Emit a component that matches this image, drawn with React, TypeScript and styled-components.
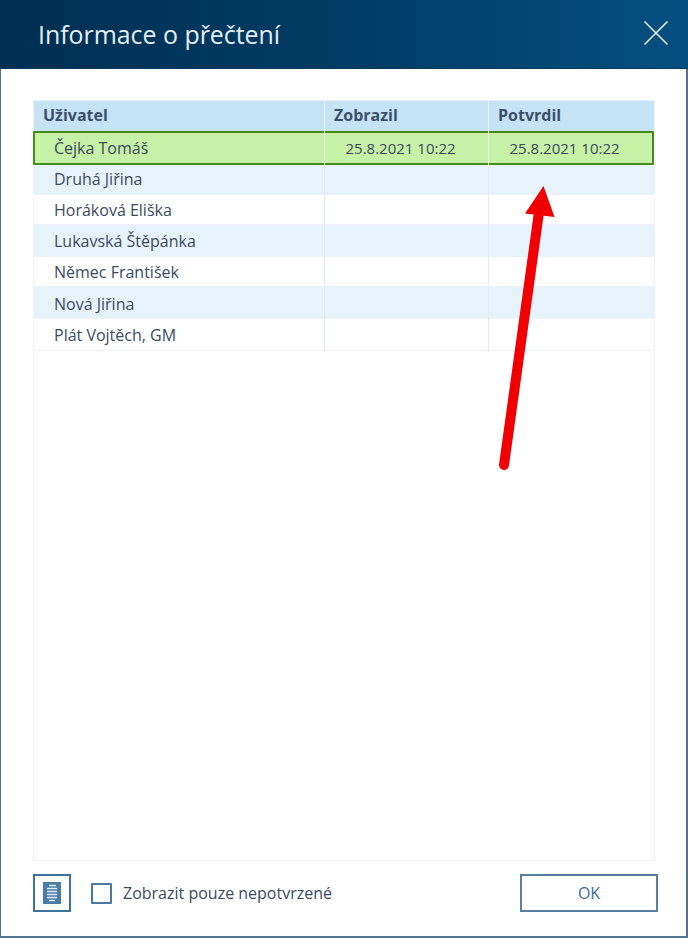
import React from "react";
import styled, { createGlobalStyle } from "styled-components";

const Global = createGlobalStyle`
  html, body { margin: 0; padding: 0; background: #ffffff; }
  body { font-family: "Open Sans", "Liberation Sans", sans-serif; }
`;

const Dialog = styled.div`
  position: relative;
  box-sizing: border-box;
  width: 688px;
  height: 938px;
  display: flex;
  flex-direction: column;
  background: #ffffff;
  border-style: solid;
  border-color: #4f7391;
  border-width: 0 2px 2px 1px;
`;

const Header = styled.header`
  height: 69px;
  flex: none;
  margin: 0 -2px 0 -1px;
  padding: 0 19px 0 38px;
  display: flex;
  align-items: center;
  justify-content: space-between;
  background: linear-gradient(90deg, #002f52 0%, #003c65 50%, #054f80 100%);
  border-bottom: 1px solid #0a3a5e;
  box-sizing: border-box;
`;

const Title = styled.h1`
  margin: 0;
  font-size: 24.9px;
  font-weight: 400;
  color: #e6eef4;
`;

const CloseButton = styled.button`
  width: 26px;
  height: 26px;
  padding: 0;
  border: 0;
  background: none;
  display: block;
  margin-bottom: 2px;
`;

const Body = styled.div`
  flex: 1;
  display: flex;
  flex-direction: column;
  padding: 31px 31px 0 32px;
  min-height: 0;
`;

const Grid = styled.div`
  box-sizing: border-box;
  width: 622px;
  height: 761px;
  flex: none;
  border: 1px solid #edf2fa;
  border-top: 0;
`;

const columns = "291px 164px 165px";

const HeadRow = styled.div`
  display: grid;
  grid-template-columns: ${columns};
  height: 31px;
  background: #c5e3f5;
  border-top: 1px solid #e4f0f9;
  box-sizing: border-box;
`;

const HeadCell = styled.div`
  box-sizing: border-box;
  padding-left: 9px;
  font-size: 16px;
  font-weight: 700;
  line-height: 29px;
  color: #3d4f6b;
  border-right: 1px solid #edf3fa;
  &:last-child { border-right: 0; }
`;

const Row = styled.div<{ $alt?: boolean; $h: number; $lh: number }>`
  box-sizing: border-box;
  display: grid;
  grid-template-columns: ${columns};
  height: ${(p) => p.$h}px;
  line-height: ${(p) => p.$lh}px;
  background: ${(p) => (p.$alt ? "#e7f3fb" : "#ffffff")};
  border-bottom: 1px solid #edf2fa;
`;

const SelectedRow = styled.div`
  box-sizing: border-box;
  display: grid;
  grid-template-columns: 292px 164px 165px;
  height: 34px;
  line-height: 34px;
  margin-left: -1px;
  background: #c6f1a6;
  box-shadow: inset 0 0 0 2px #478c1a;
  border-radius: 1px;
`;

const Cell = styled.div`
  box-sizing: border-box;
  font-size: 16px;
  color: #3c4a60;
  white-space: nowrap;
  padding-left: 20px;
  border-right: 1px solid #e1ebf7;
  &:last-child { border-right: 0; }
`;

const SelectedCell = styled(Cell)`
  border-right-color: #e9f2f6;
  &:first-child { padding-left: 21px; }
`;

const DateCell = styled(SelectedCell)`
  font-size: 15px;
  padding-left: 20.5px;
`;

const Footer = styled.div`
  display: flex;
  align-items: center;
  padding-top: 13px;
`;

const DocButton = styled.button`
  box-sizing: border-box;
  width: 38px;
  height: 38px;
  padding: 0;
  background: #fff;
  border: 2px solid #3f729b;
  display: flex;
  align-items: center;
  justify-content: center;
  margin-right: 20px;
`;

const CheckLabel = styled.label`
  display: flex;
  align-items: center;
  font-size: 16px;
  color: #3c4a60;
`;

const CheckBox = styled.span`
  box-sizing: border-box;
  width: 21px;
  height: 21px;
  border: 2px solid #4a7aa3;
  border-radius: 1px;
  margin-right: 11px;
  background: #fff;
`;

const OkButton = styled.button`
  box-sizing: border-box;
  margin-left: auto;
  margin-right: -3px;
  width: 138px;
  height: 38px;
  background: #fff;
  border: 2px solid #55819f;
  font-family: inherit;
  font-size: 16px;
  color: #3e6a92;
  padding: 0;
`;

const ArrowLayer = styled.svg`
  position: absolute;
  left: -1px;
  top: 0;
  width: 688px;
  height: 938px;
  pointer-events: none;
`;

const users = [
  { name: "Druhá Jiřina", h: 30, lh: 29 },
  { name: "Horáková Eliška", h: 30, lh: 30 },
  { name: "Lukavská Štěpánka", h: 32, lh: 33 },
  { name: "Němec František", h: 30, lh: 31 },
  { name: "Nová Jiřina", h: 32, lh: 34 },
  { name: "Plát Vojtěch, GM", h: 32, lh: 33 },
];

export default function App() {
  return (
    <>
      <Global />
      <Dialog>
        <Header>
          <Title>Informace o přečtení</Title>
          <CloseButton aria-label="Zavřít">
            <svg width="26" height="26" viewBox="0 0 26 26">
              <path d="M1.5 1.5 L24.5 24.5 M24.5 1.5 L1.5 24.5" stroke="#e6eef4" strokeWidth="1.6" fill="none" />
            </svg>
          </CloseButton>
        </Header>
        <Body>
          <Grid>
            <HeadRow>
              <HeadCell>Uživatel</HeadCell>
              <HeadCell>Zobrazil</HeadCell>
              <HeadCell>Potvrdil</HeadCell>
            </HeadRow>
            <SelectedRow>
              <SelectedCell>Čejka Tomáš</SelectedCell>
              <DateCell>25.8.2021 10:22</DateCell>
              <DateCell>25.8.2021 10:22</DateCell>
            </SelectedRow>
            {users.map((u, i) => (
              <Row key={u.name} $h={u.h} $lh={u.lh} $alt={i % 2 === 0}>
                <Cell>{u.name}</Cell>
                <Cell />
                <Cell />
              </Row>
            ))}
          </Grid>
          <Footer>
            <DocButton aria-label="Dokument">
              <svg width="18" height="22" viewBox="0 0 18 22">
                <rect width="18" height="22" fill="#4a7da6" />
                <path d="M6 3.5H13M4 6.5H14M4 9.5H14M4 12.5H14M4 15.5H14M6 18.5H12" stroke="#dfeaf2" strokeWidth="1.3" />
              </svg>
            </DocButton>
            <CheckLabel>
              <CheckBox />
              Zobrazit pouze nepotvrzené
            </CheckLabel>
            <OkButton>OK</OkButton>
          </Footer>
        </Body>
        <ArrowLayer viewBox="0 0 688 938">
          <line x1="504" y1="465" x2="539" y2="212" stroke="#f00000" strokeWidth="10" strokeLinecap="round" />
          <polygon points="543.5,186 525,213.5 554.5,217" fill="#f00000" />
        </ArrowLayer>
      </Dialog>
    </>
  );
}
